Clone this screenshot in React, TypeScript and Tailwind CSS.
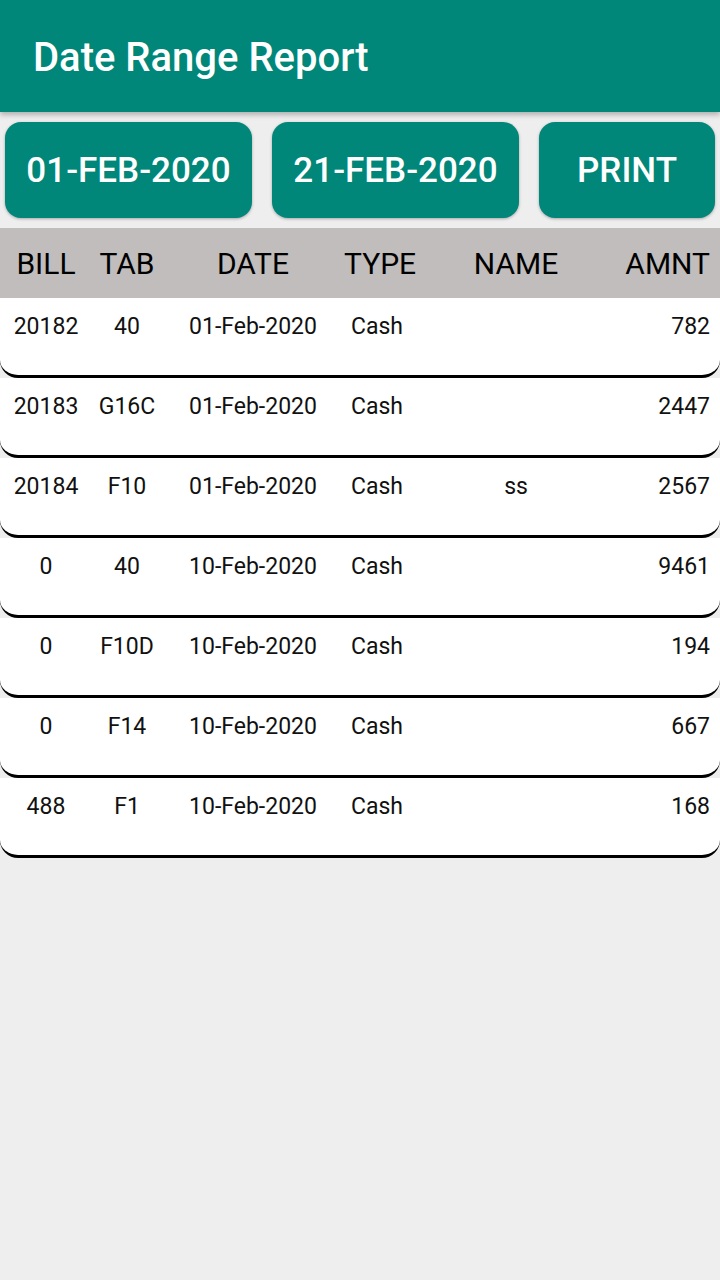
import React from "react";

const rows = [
  ["20182", "40", "01-Feb-2020", "Cash", "", "782"],
  ["20183", "G16C", "01-Feb-2020", "Cash", "", "2447"],
  ["20184", "F10", "01-Feb-2020", "Cash", "ss", "2567"],
  ["0", "40", "10-Feb-2020", "Cash", "", "9461"],
  ["0", "F10D", "10-Feb-2020", "Cash", "", "194"],
  ["0", "F14", "10-Feb-2020", "Cash", "", "667"],
  ["488", "F1", "10-Feb-2020", "Cash", "", "168"],
];

function Cells({ cells }: { cells: string[] }) {
  return (
    <>
      <div className="w-[92px] text-center whitespace-nowrap">{cells[0]}</div>
      <div className="w-[70px] text-center whitespace-nowrap">{cells[1]}</div>
      <div className="w-[182px] text-center whitespace-nowrap">{cells[2]}</div>
      <div className="w-[66px] text-center whitespace-nowrap">{cells[3]}</div>
      <div className="w-[212px] text-center whitespace-nowrap">{cells[4]}</div>
      <div className="flex-1 text-right pr-[10px] whitespace-nowrap">{cells[5]}</div>
    </>
  );
}

export default function App() {
  return (
    <div
      className="w-[720px] h-[1280px] bg-[#eeeeee] flex flex-col"
      style={{ fontFamily: "Roboto, 'Noto Sans', sans-serif" }}
    >
      <div className="h-[112px] bg-[#00877a] flex items-center pl-[33px] pt-[4px] shadow-[0_3px_5px_rgba(0,0,0,0.25)] relative z-10">
        <span className="text-white text-[40px] font-medium">Date Range Report</span>
      </div>
      <div className="flex px-[5px] gap-[20px] mt-[10px]">
        <div className="w-[247px] h-[96px] pt-[3px] rounded-[16px] bg-[#00877a] flex items-center justify-center text-white text-[35px] font-medium shadow-[0_1px_3px_rgba(0,0,0,0.3)]">
          01-FEB-2020
        </div>
        <div className="w-[247px] h-[96px] pt-[3px] rounded-[16px] bg-[#00877a] flex items-center justify-center text-white text-[35px] font-medium shadow-[0_1px_3px_rgba(0,0,0,0.3)]">
          21-FEB-2020
        </div>
        <div className="flex-1 h-[96px] pt-[3px] rounded-[16px] bg-[#00877a] flex items-center justify-center text-white text-[35px] font-medium shadow-[0_1px_3px_rgba(0,0,0,0.3)]">
          PRINT
        </div>
      </div>
      <div className="mt-[10px] h-[70px] bg-[#c0bdbc] flex items-center text-[30px] text-black">
        <Cells cells={["BILL", "TAB", "DATE", "TYPE", "NAME", "AMNT"]} />
      </div>
      <div className="flex flex-col">
        {rows.map((r, i) => (
          <div
            key={i}
            className="h-[80px] bg-white border-b-[3px] border-black rounded-b-[18px] flex items-start pt-[12px] text-[23px] text-[#111]"
          >
            <Cells cells={r} />
          </div>
        ))}
      </div>
    </div>
  );
}
